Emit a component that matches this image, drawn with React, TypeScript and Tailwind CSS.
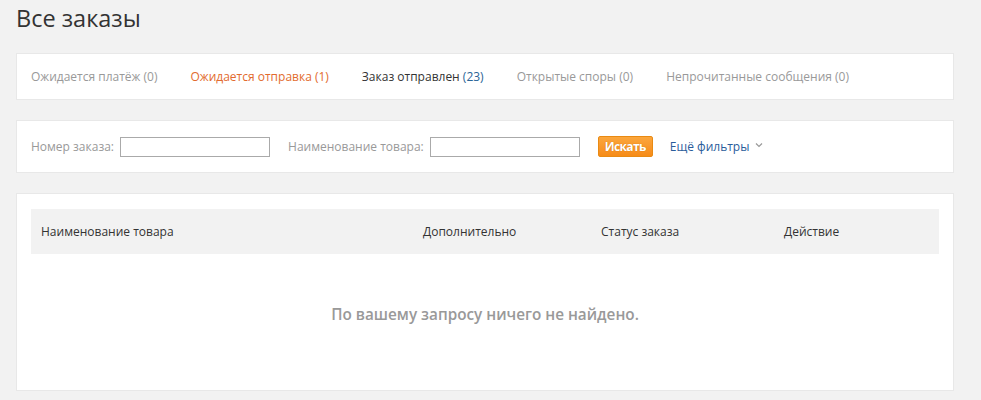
import React from "react";

const font = { fontFamily: '"Open Sans", "Noto Sans", sans-serif' };

export default function App() {
  const tabs = [
    { label: "Ожидается платёж (0)", cls: "text-[#999999]" },
    { label: "Ожидается отправка (1)", cls: "text-[#e26b2e]" },
    { label: "Заказ отправлен", count: "(23)", cls: "text-[#333333]" },
    { label: "Открытые споры (0)", cls: "text-[#999999]" },
    { label: "Непрочитанные сообщения (0)", cls: "text-[#999999]" },
  ];
  return (
    <div className="min-h-[400px] w-[981px] bg-[#f2f2f2] pl-4 pr-[27px] pt-[3px]" style={font}>
      <h1 className="text-[23.5px] leading-[30px] text-[#333333] font-normal">Все заказы</h1>

      <div className="mt-5 h-[47px] border border-[#e8e8e8] bg-white flex items-center pl-[14px] text-[12px]">
        {tabs.map((t, i) => (
          <span key={i} className={`${t.cls} ${i < 4 ? "mr-[33px]" : ""}`}>
            {t.label}
            {t.count && <span className="text-[#2a6496]"> {t.count}</span>}
          </span>
        ))}
      </div>

      <div className="mt-[20px] h-[53px] border border-[#e8e8e8] bg-white flex items-center pl-[14px] text-[12px] text-[#999999]">
        <span>Номер заказа:</span>
        <input className="ml-[6px] w-[150px] h-[20px] border border-[#aaaaaa] bg-white outline-none" />
        <span className="ml-[18px]">Наименование товара:</span>
        <input className="ml-[6px] w-[150px] h-[20px] border border-[#aaaaaa] bg-white outline-none" />
        <button className="ml-[18px] w-[55px] h-[21px] rounded-[2px] border border-[#e98a13] bg-gradient-to-b from-[#fba63c] to-[#f68b16] text-white text-[12px] font-bold tracking-[-0.6px] leading-none [text-shadow:0_0_1px_#c26a00]">
          Искать
        </button>
        <span className="ml-[17px] text-[#2a5c9a] flex items-center gap-[6px]">
          Ещё фильтры
          <svg width="8" height="6" viewBox="0 0 8 6" className="-mt-[3px]">
            <path d="M1 1.5 L4 4.5 L7 1.5" fill="none" stroke="#999999" strokeWidth="1.2" />
          </svg>
        </span>
      </div>

      <div className="mt-[20px] h-[198px] border border-[#e8e8e8] bg-white px-[14px] pt-[15px]">
        <div className="h-[45px] bg-[#f2f2f2] flex items-center text-[12px] text-[#333333]">
          <span className="pl-[10px] w-[392px]">Наименование товара</span>
          <span className="w-[178px]">Дополнительно</span>
          <span className="w-[183px]">Статус заказа</span>
          <span>Действие</span>
        </div>
        <div className="mt-[49px] text-center text-[15.3px] font-semibold text-[#999999]">
          По вашему запросу ничего не найдено.
        </div>
      </div>
    </div>
  );
}
